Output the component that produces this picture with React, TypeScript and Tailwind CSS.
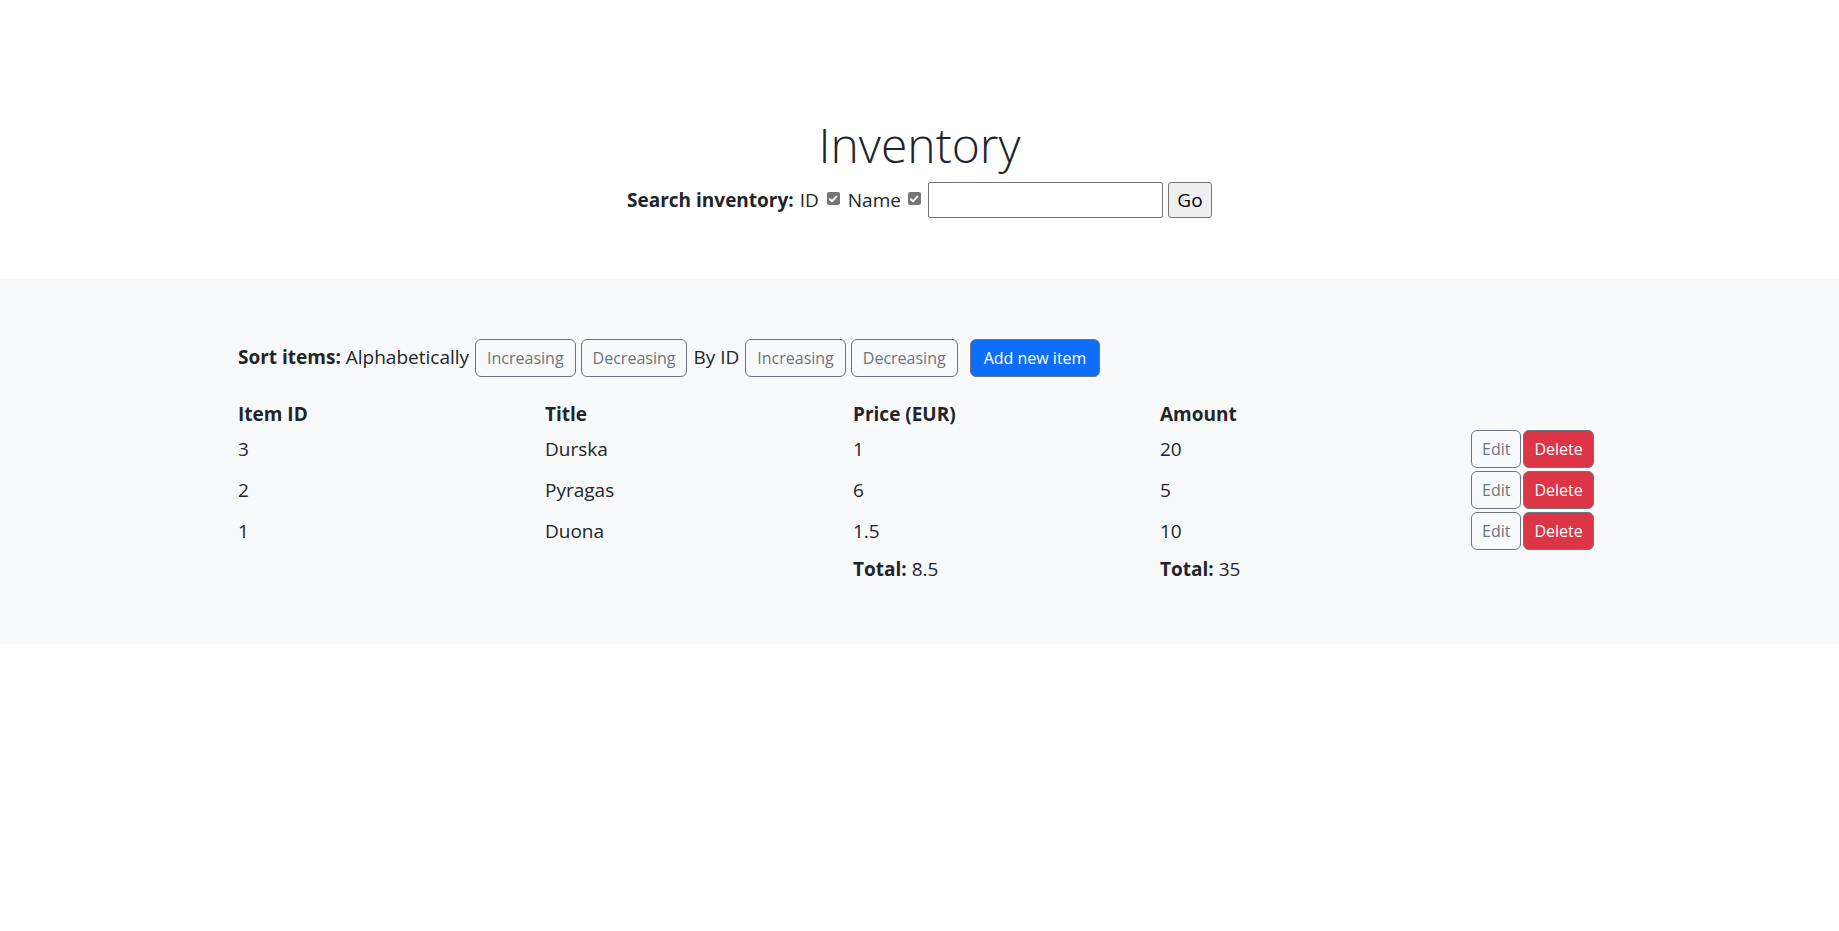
import React from "react";

function Check({ className = "" }: { className?: string }) {
  return (
    <span className={`flex h-[13px] w-[13px] shrink-0 items-center justify-center self-center rounded-[2px] bg-[#767676] -translate-y-[1px] ${className}`}>
      <svg width="10" height="10" viewBox="0 0 10 10" fill="none">
        <path d="M1.8 5.2 L4 7.3 L8.3 2.6" stroke="white" strokeWidth="1.9" strokeLinecap="round" strokeLinejoin="round" />
      </svg>
    </span>
  );
}

const outlineBtn =
  "h-[38px] rounded-md border border-[#6c757d] bg-transparent text-[16px] leading-6 text-[#6c757d]";

const rows = [
  { id: 3, title: "Durska", price: "1", amount: "20" },
  { id: 2, title: "Pyragas", price: "6", amount: "5" },
  { id: 1, title: "Duona", price: "1.5", amount: "10" },
];

export default function App() {
  return (
    <div className="min-h-screen bg-white font-['Open_Sans',sans-serif] text-[#212529]">
      <div className="flex flex-col items-center pt-[116px] pb-[61px]">
        <h1 className="text-[48px] font-light leading-[1.2] mb-[8px]">Inventory</h1>
        <div className="flex h-[36px] items-center text-[19px] leading-[30px]">
          <span className="font-bold">Search inventory:</span>
          <span className="ml-[6px]">ID</span>
          <Check className="ml-[8px]" />
          <span className="ml-[8px]">Name</span>
          <Check className="ml-[7px]" />
          <input
            type="text"
            className="ml-[7px] h-[36px] w-[235px] rounded-[2px] border border-[#767676] bg-white px-1 outline-none"
          />
          <button className="ml-[5px] h-[36px] w-[44px] rounded-[3px] border border-[#767676] bg-[#efefef] text-[19px] text-black">
            Go
          </button>
        </div>
      </div>

      <div className="h-[365px] bg-[#f8f9fa] pt-[60px]">
        <div className="mx-auto w-[1363px]">
          <div className="flex h-[38px] items-center text-[19px] leading-[30px]">
            <span className="-translate-y-[1px]">
              <span className="font-bold">Sort items:</span> Alphabetically
            </span>
            <button className={`${outlineBtn} ml-[6px] px-[11px]`}>Increasing</button>
            <button className={`${outlineBtn} ml-[5px] px-[11px]`}>Decreasing</button>
            <span className="ml-[6px] -translate-y-[1px]">By ID</span>
            <button className={`${outlineBtn} ml-[6px] px-[11px]`}>Increasing</button>
            <button className={`${outlineBtn} ml-[5px] px-[11px]`}>Decreasing</button>
            <button className="ml-[12px] h-[38px] rounded-md border border-[#6c757d] bg-[#0d6efd] px-[13px] text-[16px] leading-6 text-white">
              Add new item
            </button>
          </div>

          <div className="mt-[22px] text-[19px] leading-[30px]">
            <div className="grid h-[30px] grid-cols-[307px_308px_307px_311px_1fr] items-center font-bold">
              <div>Item ID</div>
              <div>Title</div>
              <div>Price (EUR)</div>
              <div>Amount</div>
              <div></div>
            </div>
            {rows.map((r) => (
              <div key={r.id} className="grid h-[41px] grid-cols-[307px_308px_307px_311px_1fr] items-center">
                <div>{r.id}</div>
                <div>{r.title}</div>
                <div>{r.price}</div>
                <div>{r.amount}</div>
                <div className="flex items-center">
                  <button className={`${outlineBtn} px-[10px]`}>Edit</button>
                  <button className="ml-[2px] h-[38px] rounded-md border border-[#6c757d] bg-[#dc3545] px-[10px] text-[16px] leading-6 text-white">
                    Delete
                  </button>
                </div>
              </div>
            ))}
            <div className="grid h-[32px] grid-cols-[307px_308px_307px_311px_1fr] items-end">
              <div></div>
              <div></div>
              <div>
                <span className="font-bold">Total:</span> 8.5
              </div>
              <div>
                <span className="font-bold">Total:</span> 35
              </div>
              <div></div>
            </div>
          </div>
        </div>
      </div>
    </div>
  );
}
